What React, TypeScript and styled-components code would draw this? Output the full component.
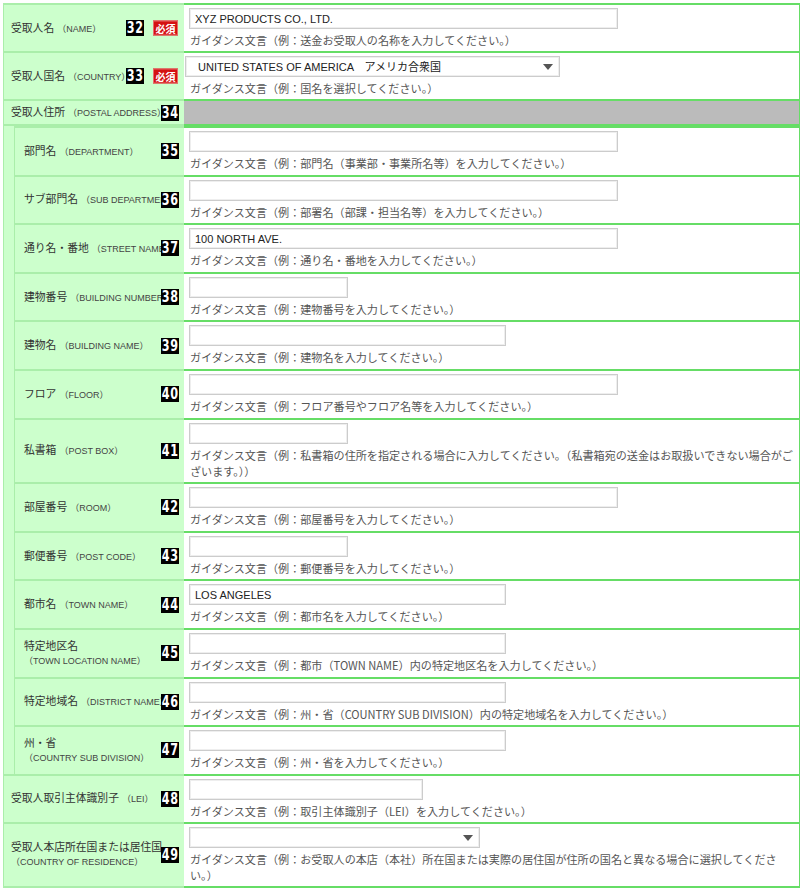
import React from 'react';
import styled, {createGlobalStyle} from 'styled-components';

const GlobalStyle = createGlobalStyle`
  body {
    margin: 0;
    background: #fff;
    font-family: "Liberation Sans", "Noto Sans CJK JP", sans-serif;
    color: #333;
  }
`;

const Form = styled.div`
  width: 797px;
  margin: 3px 0 0 3px;
  box-sizing: border-box;
  border-left: 1px solid #aaeeaa;
  border-right: 1px solid #66dd66;
  display: flex;
  flex-direction: column;
`;

const Row = styled.div`
  display: flex;

  &:first-child > div {
    border-top-width: 2px;
  }
`;

const Group = styled.div`
  display: flex;
`;

const Gutter = styled.div`
  flex: 0 0 11px;
  box-sizing: border-box;
  background: #ccffcc;
  border-right: 1px solid #aaeeaa;
  border-bottom: 2px solid #aaeeaa;
`;

const GroupRows = styled.div`
  flex: 1;
  display: flex;
  flex-direction: column;
`;

const LabelCell = styled.div<{$nested?: boolean}>`
  position: relative;
  flex: 0 0 ${p => (p.$nested ? 169 : 180)}px;
  box-sizing: border-box;
  background: #ccffcc;
  border-bottom: 2px solid #aaeeaa;
  border-top: 0 solid #aaeeaa;
  padding-left: ${p => (p.$nested ? 9 : 7)}px;
  display: flex;
  align-items: center;
  overflow: hidden;
  white-space: nowrap;
`;

const LabelText = styled.div`
  font-size: 10.8px;
  line-height: 14px;
  color: #333;
`;

const En = styled.span`
  font-size: 9px;
  color: #444;
`;

const NumBadge = styled.span<{$req?: boolean}>`
  position: absolute;
  right: ${p => (p.$req ? 40 : 5)}px;
  top: 50%;
  transform: translateY(-50%);
  width: 18px;
  height: 16px;
  background: #000;
  display: flex;
  align-items: center;
  justify-content: center;
  overflow: hidden;
`;

const Digits = styled.span`
  display: inline-block;
  color: #fff;
  font: bold 16px/16px "DejaVu Sans", sans-serif;
  letter-spacing: 1px;
  white-space: nowrap;
  transform: scaleX(0.7);
`;

const ReqBadge = styled.span`
  position: absolute;
  right: 6px;
  top: 50%;
  transform: translateY(-50%);
  width: 25px;
  height: 15px;
  box-sizing: border-box;
  background: #d41111;
  border: 1px solid #e86a6a;
  color: #fff;
  font: bold 10px/13px "Noto Sans CJK JP", sans-serif;
  text-align: center;
`;

const FieldCell = styled.div<{$gray?: boolean; $nested?: boolean}>`
  flex: 1;
  min-width: 0;
  box-sizing: border-box;
  background: ${p => (p.$gray ? '#bbbbbb' : '#fff')};
  border-bottom: 2px solid #66dd66;
  border-top: 0 solid #66dd66;
  padding: ${p => (p.$gray ? '0' : `3px 6px ${p.$nested ? 3.6 : 3}px 5px`)};
  height: ${p => (p.$gray ? '25px' : 'auto')};
`;

const TextInput = styled.input<{$w: number}>`
  display: block;
  width: ${p => p.$w}px;
  height: 21px;
  box-sizing: border-box;
  margin: 0;
  border: 1px solid #cccccc;
  box-shadow: inset 0 0 0 1px #eeeeee;
  padding: 0 5px;
  font: 11px "Liberation Sans", "Noto Sans CJK JP", sans-serif;
  color: #222;
  background: #fff;
  outline: none;
`;

const SelectWrap = styled.div<{$w: number; $shift: number}>`
  position: relative;
  width: ${p => p.$w}px;
  margin-left: ${p => p.$shift}px;
`;

const Select = styled.select`
  display: block;
  width: 100%;
  height: 21px;
  box-sizing: border-box;
  margin: 0;
  appearance: none;
  border: 1px solid #cccccc;
  box-shadow: inset 0 0 0 1px #eeeeee;
  border-radius: 0;
  background: #fff;
  padding: 0 24px 0 12px;
  font: 11px "Liberation Sans", "Noto Sans CJK JP", sans-serif;
  color: #222;
  outline: none;
`;

const Arrow = styled.svg`
  position: absolute;
  right: 7px;
  top: 8px;
  width: 10px;
  height: 6px;
  pointer-events: none;
`;

const Guide = styled.div`
  margin: 3px 0 0 1px;
  font-family: "Noto Sans CJK JP", sans-serif;
  font-size: 11.1px;
  line-height: 16px;
  color: #555;
`;

type Field = {
  no: number;
  ja: string;
  en: string;
  twoLine?: boolean;
  req?: boolean;
  kind: 'input' | 'select';
  w: number;
  shift?: number;
  value?: string;
  guide: string;
};

const g = (s: string) => `ガイダンス文言（例：${s}）`;

const topFields: Field[] = [
  {no: 32, ja: '受取人名', en: 'NAME', req: true, kind: 'input', w: 429, value: 'XYZ PRODUCTS CO., LTD.', guide: g('送金お受取人の名称を入力してください。')},
  {no: 33, ja: '受取人国名', en: 'COUNTRY', req: true, kind: 'select', w: 375, shift: -4, value: 'UNITED STATES OF AMERICA　アメリカ合衆国', guide: g('国名を選択してください。')},
];

const addressFields: Field[] = [
  {no: 35, ja: '部門名', en: 'DEPARTMENT', kind: 'input', w: 429, guide: g('部門名（事業部・事業所名等）を入力してください。')},
  {no: 36, ja: 'サブ部門名', en: 'SUB DEPARTMENT', kind: 'input', w: 429, guide: g('部署名（部課・担当名等）を入力してください。')},
  {no: 37, ja: '通り名・番地', en: 'STREET NAME', kind: 'input', w: 429, value: '100 NORTH AVE.', guide: g('通り名・番地を入力してください。')},
  {no: 38, ja: '建物番号', en: 'BUILDING NUMBER', kind: 'input', w: 159, guide: g('建物番号を入力してください。')},
  {no: 39, ja: '建物名', en: 'BUILDING NAME', kind: 'input', w: 317, guide: g('建物名を入力してください。')},
  {no: 40, ja: 'フロア', en: 'FLOOR', kind: 'input', w: 429, guide: g('フロア番号やフロア名等を入力してください。')},
  {no: 41, ja: '私書箱', en: 'POST BOX', kind: 'input', w: 159, guide: g('私書箱の住所を指定される場合に入力してください。（私書箱宛の送金はお取扱いできない場合がございます。）')},
  {no: 42, ja: '部屋番号', en: 'ROOM', kind: 'input', w: 429, guide: g('部屋番号を入力してください。')},
  {no: 43, ja: '郵便番号', en: 'POST CODE', kind: 'input', w: 159, guide: g('郵便番号を入力してください。')},
  {no: 44, ja: '都市名', en: 'TOWN NAME', kind: 'input', w: 317, value: 'LOS ANGELES', guide: g('都市名を入力してください。')},
  {no: 45, ja: '特定地区名', en: 'TOWN LOCATION NAME', twoLine: true, kind: 'input', w: 317, guide: g('都市（TOWN NAME）内の特定地区名を入力してください。')},
  {no: 46, ja: '特定地域名', en: 'DISTRICT NAME', kind: 'input', w: 317, guide: g('州・省（COUNTRY SUB DIVISION）内の特定地域名を入力してください。')},
  {no: 47, ja: '州・省', en: 'COUNTRY SUB DIVISION', twoLine: true, kind: 'input', w: 317, guide: g('州・省を入力してください。')},
];

const bottomFields: Field[] = [
  {no: 48, ja: '受取人取引主体識別子', en: 'LEI', kind: 'input', w: 234, guide: g('取引主体識別子（LEI）を入力してください。')},
  {no: 49, ja: '受取人本店所在国または居住国', en: 'COUNTRY OF RESIDENCE', twoLine: true, kind: 'select', w: 291, guide: g('お受取人の本店（本社）所在国または実際の居住国が住所の国名と異なる場合に選択してください。')},
];

function Label({f}: {f: Field}) {
  return (
    <LabelText>
      {f.ja}
      {f.twoLine ? <br/> : ' '}
      <En>（{f.en}）</En>
    </LabelText>
  );
}

function Badge({no, req}: {no: number; req?: boolean}) {
  return (
    <NumBadge $req={req}>
      <Digits>{no}</Digits>
    </NumBadge>
  );
}

function FieldRow({f, nested}: {f: Field; nested?: boolean}) {
  return (
    <Row>
      <LabelCell $nested={nested}>
        <Label f={f}/>
        <Badge no={f.no} req={f.req}/>
        {f.req ? <ReqBadge>必須</ReqBadge> : null}
      </LabelCell>
      <FieldCell $nested={nested}>
        {f.kind === 'input' ? (
          <TextInput $w={f.w} type="text" defaultValue={f.value ?? ''}/>
        ) : (
          <SelectWrap $w={f.w} $shift={f.shift ?? 0}>
            <Select defaultValue={f.value ?? ''}>
              <option value={f.value ?? ''}>{f.value ?? ''}</option>
            </Select>
            <Arrow viewBox="0 0 10 6">
              <polygon points="0,0 10,0 5,6" fill="#555"/>
            </Arrow>
          </SelectWrap>
        )}
        <Guide>{f.guide}</Guide>
      </FieldCell>
    </Row>
  );
}

export default function App() {
  return (
    <>
      <GlobalStyle/>
      <Form>
        {topFields.map(f => <FieldRow key={f.no} f={f}/>)}
        <Row>
          <LabelCell>
            <LabelText>受取人住所 <En>（POSTAL ADDRESS）</En></LabelText>
            <Badge no={34}/>
          </LabelCell>
          <FieldCell $gray/>
        </Row>
        <Group>
          <Gutter/>
          <GroupRows>
            {addressFields.map(f => <FieldRow key={f.no} f={f} nested/>)}
          </GroupRows>
        </Group>
        {bottomFields.map(f => <FieldRow key={f.no} f={f}/>)}
      </Form>
    </>
  );
}
